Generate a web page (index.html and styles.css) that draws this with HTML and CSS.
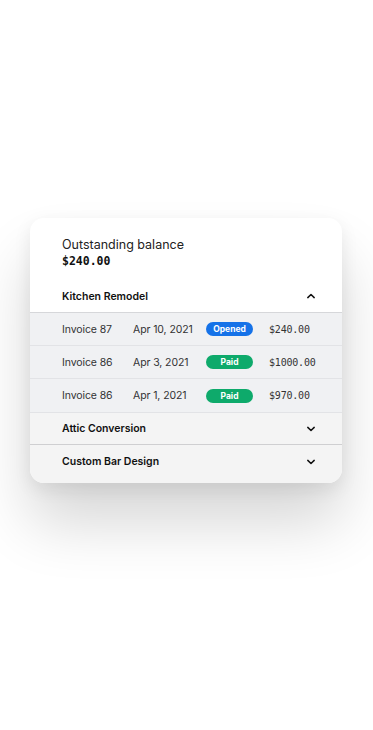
FILE: index.html
```html
<!doctype html>
<html>
    <head>
        <title>Outstanding balance</title>
        <link rel="stylesheet" href="styles.css">
    </head>
    <body>
        <div class="card">
            <div class="balance">
                <div class="balance-label">Outstanding balance</div>
                <div class="balance-amount">$240.00</div>
            </div>

            <div class="project open">
                <span class="project-name">Kitchen Remodel</span>
                <svg class="chevron" width="10" height="6" viewBox="0 0 10 6"><path d="M1.8 4.6 L5 1.5 L8.2 4.6" fill="none" stroke="#111" stroke-width="1.5" stroke-linecap="round" stroke-linejoin="round"/></svg>
            </div>

            <div class="invoices">
                <div class="invoice">
                    <span class="inv-name">Invoice 87</span>
                    <span class="inv-date">Apr 10, 2021</span>
                    <span class="badge opened">Opened</span>
                    <span class="inv-amount">$240.00</span>
                </div>
                <div class="invoice">
                    <span class="inv-name">Invoice 86</span>
                    <span class="inv-date">Apr 3, 2021</span>
                    <span class="badge paid">Paid</span>
                    <span class="inv-amount">$1000.00</span>
                </div>
                <div class="invoice">
                    <span class="inv-name">Invoice 86</span>
                    <span class="inv-date">Apr 1, 2021</span>
                    <span class="badge paid">Paid</span>
                    <span class="inv-amount">$970.00</span>
                </div>
            </div>

            <div class="project closed">
                <span class="project-name">Attic Conversion</span>
                <svg class="chevron" width="10" height="6" viewBox="0 0 10 6"><path d="M1.8 1.4 L5 4.5 L8.2 1.4" fill="none" stroke="#111" stroke-width="1.5" stroke-linecap="round" stroke-linejoin="round"/></svg>
            </div>
            <div class="project closed last">
                <span class="project-name">Custom Bar Design</span>
                <svg class="chevron" width="10" height="6" viewBox="0 0 10 6"><path d="M1.8 1.4 L5 4.5 L8.2 1.4" fill="none" stroke="#111" stroke-width="1.5" stroke-linecap="round" stroke-linejoin="round"/></svg>
            </div>
        </div>
    </body>
</html>
```

FILE: styles.css
```css
body {
    margin: 0;
    padding: 218px 0 0;
    min-height: 100vh;
    box-sizing: border-box;
    background-color: #ffffff;
    font-family: 'Inter', 'Liberation Sans', sans-serif;
    color: #1a1a1a;
}

.card {
    width: 312px;
    margin-left: 30px;
    border-radius: 14px;
    overflow: hidden;
    background-color: #ffffff;
    box-shadow: 0 40px 60px rgba(0, 0, 0, 0.16), 0 6px 18px rgba(0, 0, 0, 0.08);
}

.balance {
    height: 62px;
    box-sizing: border-box;
    padding: 18px 32px 0;
}

.balance-label {
    font-size: 12.5px;
    line-height: 17px;
    color: #222;
}

.balance-amount {
    font-family: 'DejaVu Sans Mono', monospace;
    font-size: 11.5px;
    font-weight: bold;
    line-height: 17px;
    color: #111;
}

.project {
    display: flex;
    justify-content: space-between;
    align-items: center;
    padding: 0 26px 0 32px;
    height: 32px;
}

.project-name {
    font-size: 10.5px;
    font-weight: 600;
    color: #111;
}

.project.open {
    border-bottom: 1px solid #d6d7da;
}

.project.closed {
    background-color: #f4f4f4;
    height: 31px;
}

.project.last {
    border-top: 1px solid #cfcfd1;
    height: 39px;
    padding-bottom: 5px;
    box-sizing: border-box;
}

.invoices {
    background-color: #f0f1f3;
}

.invoice {
    display: flex;
    align-items: center;
    height: 33px;
    padding-left: 32px;
    border-bottom: 1px solid #e2e3e6;
    box-sizing: border-box;
    font-size: 10.5px;
    letter-spacing: -0.1px;
    color: #333;
}

.invoice:last-child {
    height: 34px;
}

.inv-name {
    width: 71px;
}

.inv-date {
    width: 73px;
}

.inv-amount {
    font-family: 'DejaVu Sans Mono', monospace;
    font-size: 10px;
    letter-spacing: -0.2px;
    margin-left: 16px;
}

.badge {
    width: 47px;
    height: 14px;
    border-radius: 7px;
    color: #fff;
    font-size: 8.5px;
    font-weight: 700;
    line-height: 14px;
    letter-spacing: 0;
    text-align: center;
}

.opened {
    background-color: #1572e8;
}

.paid {
    background-color: #0eaa6b;
}
```
